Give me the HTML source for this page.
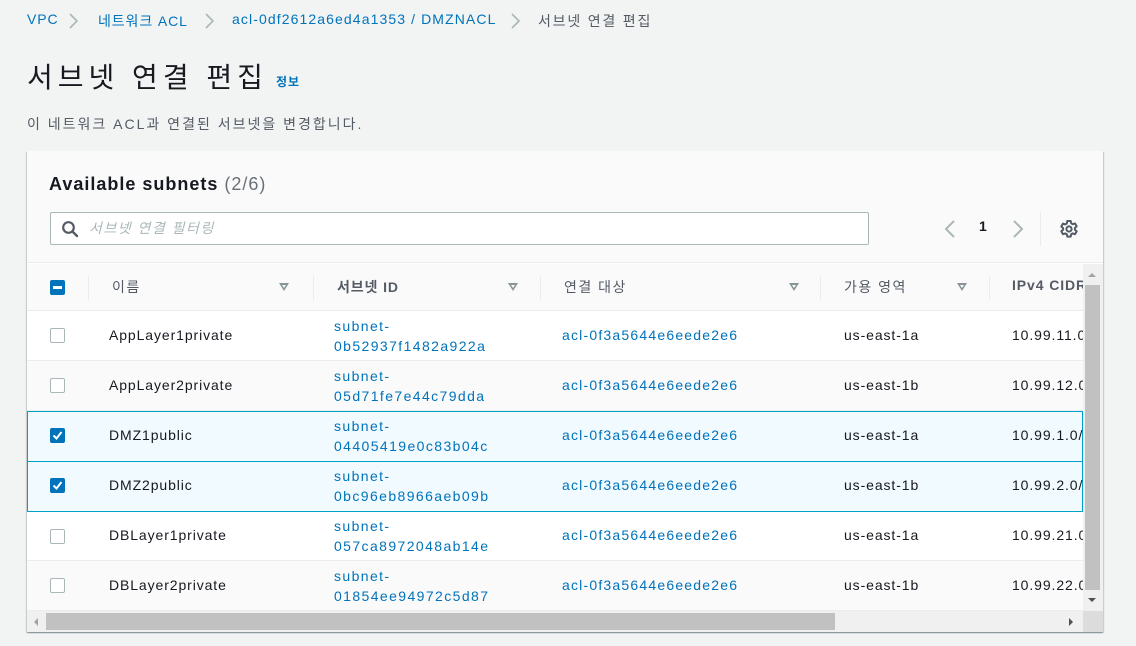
<!DOCTYPE html>
<html><head><meta charset="utf-8"><style>
*{margin:0;padding:0;box-sizing:border-box}
body{width:1136px;height:646px;background:#f2f3f3;font-family:"Liberation Sans","Noto Sans CJK KR",sans-serif;position:relative;overflow:hidden;color:#16191f;letter-spacing:0.9px}
.a{position:absolute;white-space:nowrap}
.link{color:#0073bb}
.bc{top:11px;font-size:14px}
.sid{letter-spacing:1.4px}
.acl{letter-spacing:1.2px}
.card{position:absolute;left:27px;top:151px;width:1076px;height:481px;background:#fff;box-shadow:0 1px 1px rgba(0,28,36,.3),1px 1px 1px rgba(0,28,36,.15),-1px 1px 1px rgba(0,28,36,.15);overflow:hidden}
.hd{position:absolute;left:0;top:0;width:1076px;height:112px;background:#fafafa;border-bottom:1px solid #eaeded}
.th{position:absolute;left:0;top:113px;width:1056px;height:47px;background:#fafafa;border-bottom:1px solid #eaeded;font-size:14px;font-weight:bold;color:#545b64}
.row{position:absolute;left:0;width:1056px;height:50px;border-bottom:1px solid #eaeded;font-size:14px}
.sel{background:#f1faff;border:1px solid #00a1c9;height:51px}
.cb{position:absolute;left:23px;top:17px;width:15px;height:15px;border:1px solid #aab7b8;border-radius:2px;background:#fff}
.cbc{background:#0073bb;border-color:#0073bb}
.div{position:absolute;top:12px;width:1px;height:24px;background:#eaeded}
.tri{position:absolute;top:19px;width:0;height:0;border-left:5px solid transparent;border-right:5px solid transparent;border-top:8px solid #879596}
.tri:after{content:"";position:absolute;left:-2px;top:-6px;border-left:2px solid transparent;border-right:2px solid transparent;border-top:3px solid #fafafa}
</style></head><body>
<div class="a bc link" style="left:27px">VPC</div>
<svg class="a" style="left:68px;top:12px" width="12" height="18"><path d="M2 2l7 7-7 7" fill="none" stroke="#aab7b8" stroke-width="1.6"/></svg>
<div class="a bc link" style="left:98px">네트워크 ACL</div>
<svg class="a" style="left:204px;top:12px" width="12" height="18"><path d="M2 2l7 7-7 7" fill="none" stroke="#aab7b8" stroke-width="1.6"/></svg>
<div class="a bc link" style="left:232px;letter-spacing:1.1px">acl-0df2612a6ed4a1353 / DMZNACL</div>
<svg class="a" style="left:510px;top:12px" width="12" height="18"><path d="M2 2l7 7-7 7" fill="none" stroke="#aab7b8" stroke-width="1.6"/></svg>
<div class="a bc" style="left:538px;color:#545b64;letter-spacing:1.8px">서브넷 연결 편집</div>
<div class="a" style="left:27px;top:56px;font-size:28px;letter-spacing:5px">서브넷 연결 편집</div>
<div class="a link" style="left:276px;top:73px;font-size:12px;font-weight:bold">정보</div>
<div class="a" style="left:27px;top:114px;font-size:14px;color:#545b64;letter-spacing:2px">이 네트워크 ACL과 연결된 서브넷을 변경합니다.</div>

<div class="card">
 <div class="hd">
  <div class="a" style="left:22px;top:23px;font-size:18px;font-weight:bold;letter-spacing:1px">Available subnets <span style="font-weight:normal;color:#687078">(2/6)</span></div>
  <div class="a" style="left:23px;top:61px;width:819px;height:33px;border:1px solid #aab7b8;border-radius:2px;background:#fff"></div>
  <svg class="a" style="left:34px;top:69px" width="18" height="18" viewBox="0 0 18 18"><circle cx="7.5" cy="7.5" r="5.3" fill="none" stroke="#545b64" stroke-width="2.2"/><path d="M11.5 11.5L16 16" stroke="#545b64" stroke-width="2.4" stroke-linecap="round"/></svg>
  <div class="a" style="left:62px;top:67px;font-size:14px;font-style:italic;color:#aab7b8;letter-spacing:1.5px">서브넷 연결 필터링</div>
  <svg class="a" style="left:916px;top:68px" width="14" height="20"><path d="M11 2L3 10l8 8" fill="none" stroke="#aab7b8" stroke-width="2"/></svg>
  <div class="a" style="left:952px;top:67px;font-size:14px;font-weight:bold">1</div>
  <svg class="a" style="left:984px;top:68px" width="14" height="20"><path d="M3 2l8 8-8 8" fill="none" stroke="#aab7b8" stroke-width="2"/></svg>
  <div class="a" style="left:1013px;top:61px;width:1px;height:34px;background:#eaeded"></div>
  <svg class="a" style="left:1032px;top:68px" width="20" height="20" viewBox="0 0 20 20"><path d="M8.3 2h3.4l.5 2.3 1.6.9 2.2-.8 1.7 2.9-1.8 1.6v1.8l1.8 1.6-1.7 2.9-2.2-.8-1.6.9-.5 2.3H8.3l-.5-2.3-1.6-.9-2.2.8-1.7-2.9 1.8-1.6V9.1L2.3 7.5 4 4.6l2.2.8 1.6-.9z" fill="none" stroke="#545b64" stroke-width="2" stroke-linejoin="round"/><circle cx="10" cy="10" r="2.6" fill="none" stroke="#545b64" stroke-width="2"/></svg>
 </div>
 <div class="th">
  <div class="cb cbc" style="top:16px"><div style="position:absolute;left:2px;top:5px;width:9px;height:3px;background:#fff"></div></div>
  <div class="div" style="left:61px"></div>
  <div class="a" style="left:85px;top:13px;font-weight:normal;letter-spacing:1.5px">이름</div><div class="tri" style="left:252px"></div>
  <div class="div" style="left:286px"></div>
  <div class="a" style="left:310px;top:13px">서브넷 ID</div><div class="tri" style="left:481px"></div>
  <div class="div" style="left:513px"></div>
  <div class="a" style="left:537px;top:13px;font-weight:normal;letter-spacing:1.5px">연결 대상</div><div class="tri" style="left:762px"></div>
  <div class="div" style="left:793px"></div>
  <div class="a" style="left:817px;top:13px;font-weight:normal;letter-spacing:1.5px">가용 영역</div><div class="tri" style="left:930px"></div>
  <div class="div" style="left:962px"></div>
  <div class="a" style="left:985px;top:13px">IPv4 CIDR</div>
 </div>
 <div class="row" style="top:160px;background:#fff"><div class="cb"></div><div class="a" style="left:82px;top:16px">AppLayer1private</div><div class="a link sid" style="left:307px;top:5px;line-height:20px">subnet-<br>0b52937f1482a922a</div><div class="a link acl" style="left:535px;top:16px">acl-0f3a5644e6eede2e6</div><div class="a" style="left:817px;top:16px">us-east-1a</div><div class="a" style="left:985px;top:16px">10.99.11.0/24</div></div>
 <div class="row" style="top:210px;background:#fafafa"><div class="cb"></div><div class="a" style="left:82px;top:16px">AppLayer2private</div><div class="a link sid" style="left:307px;top:5px;line-height:20px">subnet-<br>05d71fe7e44c79dda</div><div class="a link acl" style="left:535px;top:16px">acl-0f3a5644e6eede2e6</div><div class="a" style="left:817px;top:16px">us-east-1b</div><div class="a" style="left:985px;top:16px">10.99.12.0/24</div></div>
 <div class="row sel" style="top:260px;left:0"><div class="cb cbc" style="left:22px;top:16px"><svg width="13" height="13" style="position:absolute;left:0;top:0"><path d="M2.5 6.5l3 3 5-6.5" fill="none" stroke="#fff" stroke-width="2"/></svg></div><div class="a" style="left:81px;top:15px">DMZ1public</div><div class="a link sid" style="left:306px;top:4px;line-height:20px">subnet-<br>04405419e0c83b04c</div><div class="a link acl" style="left:534px;top:15px">acl-0f3a5644e6eede2e6</div><div class="a" style="left:816px;top:15px">us-east-1a</div><div class="a" style="left:984px;top:15px">10.99.1.0/24</div></div>
 <div class="row sel" style="top:310px;left:0"><div class="cb cbc" style="left:22px;top:16px"><svg width="13" height="13" style="position:absolute;left:0;top:0"><path d="M2.5 6.5l3 3 5-6.5" fill="none" stroke="#fff" stroke-width="2"/></svg></div><div class="a" style="left:81px;top:15px">DMZ2public</div><div class="a link sid" style="left:306px;top:4px;line-height:20px">subnet-<br>0bc96eb8966aeb09b</div><div class="a link acl" style="left:534px;top:15px">acl-0f3a5644e6eede2e6</div><div class="a" style="left:816px;top:15px">us-east-1b</div><div class="a" style="left:984px;top:15px">10.99.2.0/24</div></div>
 <div class="row" style="top:361px;background:#fff;height:49px"><div class="cb"></div><div class="a" style="left:82px;top:15px">DBLayer1private</div><div class="a link sid" style="left:307px;top:4px;line-height:20px">subnet-<br>057ca8972048ab14e</div><div class="a link acl" style="left:535px;top:15px">acl-0f3a5644e6eede2e6</div><div class="a" style="left:817px;top:15px">us-east-1a</div><div class="a" style="left:985px;top:15px">10.99.21.0/24</div></div>
 <div class="row" style="top:410px;background:#fafafa"><div class="cb"></div><div class="a" style="left:82px;top:16px">DBLayer2private</div><div class="a link sid" style="left:307px;top:5px;line-height:20px">subnet-<br>01854ee94972c5d87</div><div class="a link acl" style="left:535px;top:16px">acl-0f3a5644e6eede2e6</div><div class="a" style="left:817px;top:16px">us-east-1b</div><div class="a" style="left:985px;top:16px">10.99.22.0/24</div></div>
 <div class="a" style="left:1056px;top:113px;width:20px;height:347px;background:#f0f0f0"></div>
 <div class="a" style="left:1058px;top:134px;width:15px;height:305px;background:#c1c1c1"></div>
 <div class="a" style="left:1061px;top:122px;border-left:4px solid transparent;border-right:4px solid transparent;border-bottom:4px solid #a3a3a3"></div>
 <div class="a" style="left:1061px;top:447px;border-left:4px solid transparent;border-right:4px solid transparent;border-top:4px solid #505050"></div>
 <div class="a" style="left:0;top:460px;width:1056px;height:21px;background:#f0f0f0"></div>
 <div class="a" style="left:1056px;top:460px;width:20px;height:21px;background:#dcdcdc"></div>
 <div class="a" style="left:19px;top:462px;width:789px;height:17px;background:#c1c1c1"></div>
 <div class="a" style="left:7px;top:467px;border-top:4px solid transparent;border-bottom:4px solid transparent;border-right:4px solid #a3a3a3"></div>
 <div class="a" style="left:1042px;top:467px;border-top:4px solid transparent;border-bottom:4px solid transparent;border-left:4px solid #505050"></div>
</div>
</body></html>
